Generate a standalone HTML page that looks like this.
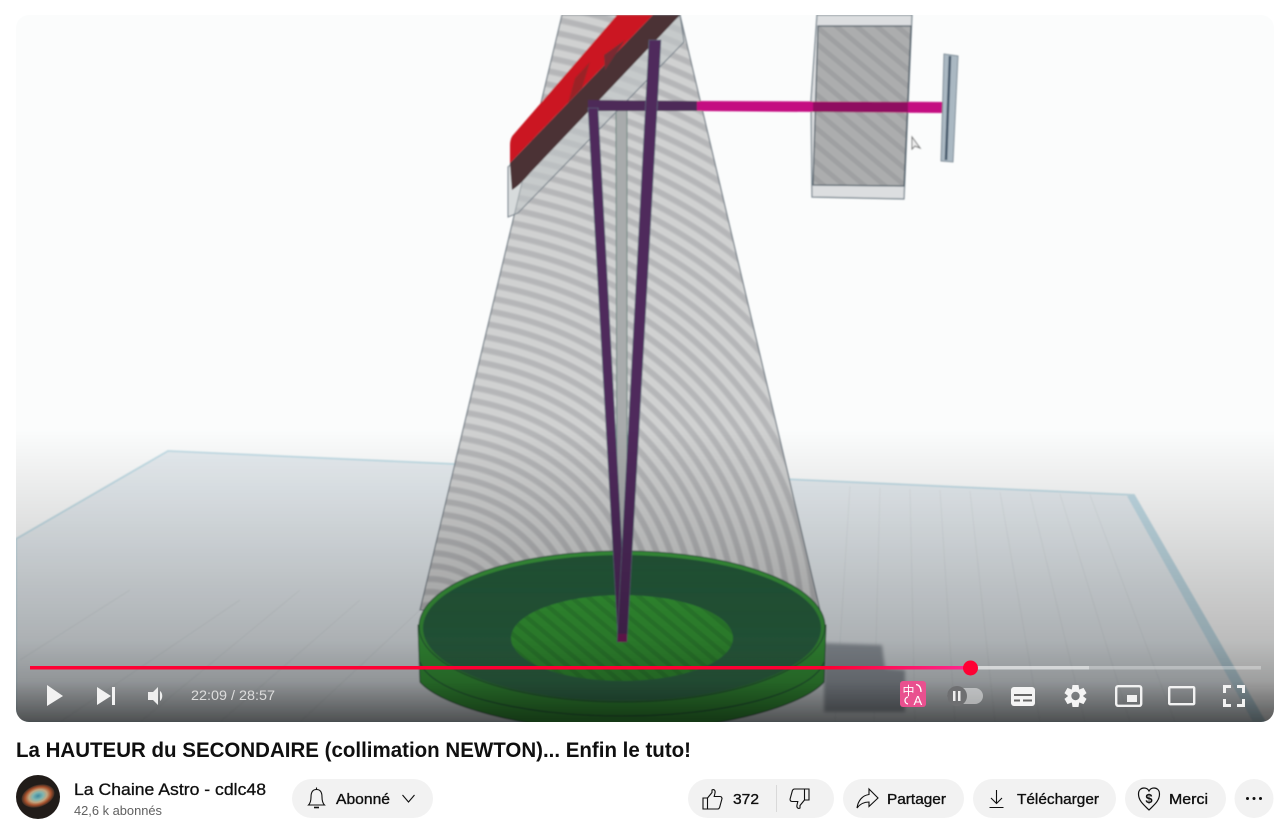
<!DOCTYPE html>
<html><head><meta charset="utf-8"><title>La HAUTEUR du SECONDAIRE</title>
<style>html,body{margin:0;padding:0;background:#fff;width:1275px;height:821px;overflow:hidden}svg{display:block}text{font-family:"Liberation Sans","Noto Sans CJK SC",sans-serif}</style></head><body>
<svg width="1275" height="821" viewBox="0 0 1275 821" xmlns="http://www.w3.org/2000/svg">
<defs>
<clipPath id="v"><rect x="16" y="15" width="1258" height="707" rx="13"/></clipPath>
<filter id="soft" x="-5%" y="-5%" width="110%" height="110%"><feGaussianBlur stdDeviation=".7"/></filter>
<filter id="soft2" x="-10%" y="-10%" width="120%" height="120%"><feGaussianBlur stdDeviation="1.6"/></filter>
<radialGradient id="st" gradientUnits="userSpaceOnUse" cx="430" cy="640" r="13" spreadMethod="repeat">
<stop offset="0" stop-color="#d0d1d1"/><stop offset=".38" stop-color="#d0d1d1"/><stop offset=".56" stop-color="#b5b6b8"/><stop offset=".86" stop-color="#b5b6b8"/><stop offset="1" stop-color="#d0d1d1"/></radialGradient>
<linearGradient id="ov" x1="0" y1="430" x2="0" y2="722" gradientUnits="userSpaceOnUse"><stop offset="0" stop-color="#000" stop-opacity="0"/><stop offset=".3" stop-color="#000" stop-opacity=".1"/><stop offset=".72" stop-color="#000" stop-opacity=".25"/><stop offset=".86" stop-color="#000" stop-opacity=".37"/><stop offset="1" stop-color="#000" stop-opacity=".66"/></linearGradient>
<linearGradient id="pg" x1="30" y1="0" x2="971" y2="0" gradientUnits="userSpaceOnUse"><stop offset="0" stop-color="#f03"/><stop offset=".85" stop-color="#f03"/><stop offset="1" stop-color="#ff2791"/></linearGradient>
<linearGradient id="dk" x1="0" y1="551" x2="0" y2="702" gradientUnits="userSpaceOnUse"><stop offset="0" stop-color="#265a3a"/><stop offset=".5" stop-color="#2a6643"/><stop offset="1" stop-color="#3a7a54"/></linearGradient>
<pattern id="gs" width="11" height="11" patternUnits="userSpaceOnUse" patternTransform="rotate(40)"><rect width="11" height="11" fill="#38a038"/><rect width="11" height="4.5" fill="#319034"/></pattern>
<pattern id="bx" width="13" height="13" patternUnits="userSpaceOnUse" patternTransform="rotate(40)"><rect width="13" height="13" fill="#acadae"/><rect width="13" height="5" fill="#9fa0a2"/></pattern>
<radialGradient id="av" cx=".5" cy=".5" r=".5"><stop offset="0" stop-color="#3f8aa0"/><stop offset=".32" stop-color="#7fb5b0"/><stop offset=".55" stop-color="#c2a57f"/><stop offset=".78" stop-color="#a8512c"/><stop offset="1" stop-color="#3a2a22"/></radialGradient>
</defs>
<g clip-path="url(#v)">
<rect x="16" y="15" width="1258" height="707" fill="#fbfcfc"/>
<g filter="url(#soft)">
<polygon points="16,539 168,451 1134,495 1265,722 16,722" fill="#e6ecf0" stroke="#c2dde6" stroke-width="1.8"/>
<polygon points="1127,496 1134,495 1265,722 1253,722" fill="#c2dce6"/>
<g stroke="#c6ccd0" stroke-width=".8" fill="none" opacity=".4">
<path d="M850,486 L835,722M880,488 L874,722M910,489 L915,722M940,490 L955,722M970,491 L995,722M1000,492 L1040,722M1030,493 L1085,722M1060,494 L1130,722M1090,495 L1175,722"/>
<path d="M60,722 L240,600M140,722 L300,590M220,722 L360,600M300,722 L420,610M20,660 L130,590"/>
</g>
<polygon points="824,643 882,645 885,668 905,670 905,712 824,712" fill="#9aa1a9" filter="url(#soft2)"/>
<polygon points="562,15 680,15 820,610 420,610" fill="url(#st)" stroke="#6f7a83" stroke-width="1.1"/>
<polygon points="616,110 627,110 627,548 617,548" fill="#a8abac" stroke="#6f8a84" stroke-width="1"/>
<polygon points="680,15 684,42 518,213 508,217 508,167" fill="#c0c4c6" fill-opacity=".6" stroke="#76818a" stroke-width="1"/>
<path d="M617,15 H653 L510,163 V145 Q510,138 514,134 Z" fill="#cb1722"/>
<path d="M653,15 H680 L530,173 Q520,185 512,190 L510,163 Z" fill="#4c3236"/>
<polygon points="575,78 590,62 582,88 568,103" fill="#9b2428"/>
<polygon points="604,55 625,40 605,70" fill="#7a2c30"/>
<polygon points="817,15 912,15 904,199 812,197 811,100" fill="#dcdee0" stroke="#76838c" stroke-width="1.2"/>
<polygon points="818,26 911,26 904,186 813,185" fill="url(#bx)" stroke="#52606a" stroke-width="1.2"/>
<polygon points="697,101 945,102 945,113 697,111" fill="#c40c81"/>
<polygon points="813,102 908,102 908,112 813,112" fill="#8f0a60"/>
<polygon points="588,100 697,101 697,111 588,111" fill="#4d2a58"/>
<polygon points="944,54 958,56 953,162 941,161" fill="#aab8c2" stroke="#6b7c88" stroke-width=".8"/>
<path d="M950,56 L946,160" stroke="#44586a" stroke-width="2.5"/>
<path d="M912,137 L912,149 L915,146 L920,148 Z" fill="#eee" stroke="#777" stroke-width="1"/>
<path d="M418,625 L420,682 C440,705 520,730 622,730 C724,730 804,705 824,682 L826,625 Z" fill="#3aa03e" stroke="#2a5e3a" stroke-width="1"/>
<path d="M420,662 A203,60 0 0 0 824,662" fill="none" stroke="#24503c" stroke-width="1"/>
<ellipse cx="622" cy="626.5" rx="203" ry="75.5" fill="#3a9a3e" stroke="#2a5e3a" stroke-width="1"/>
<ellipse cx="622" cy="628" rx="199" ry="73" fill="url(#dk)"/>
<ellipse cx="622" cy="638" rx="111" ry="43" fill="url(#gs)"/>
<polygon points="588,108 598,108 627,640 618,640" fill="#4f2a5c" stroke="#5f6f80" stroke-width=".6"/>
<polygon points="649,40 661,40 627,642 617,642" fill="#4f2a5c" stroke="#5f6f80" stroke-width=".6"/>
<rect x="618" y="634" width="9" height="8" fill="#7a1a5e"/>
</g>
<rect x="16" y="430" width="1258" height="292" fill="url(#ov)"/>
</g>
<rect x="30" y="666" width="1231" height="3.5" fill="#fff" fill-opacity=".3"/>
<rect x="971" y="666" width="118" height="3.5" fill="#fff" fill-opacity=".4"/>
<rect x="30" y="666" width="941" height="3.5" fill="url(#pg)"/>
<circle cx="970.5" cy="668" r="7.5" fill="#f03"/>
<polygon points="47,685 63,696 47,706" fill="#f2f2f2"/>
<polygon points="97,687 111,696 97,705" fill="#f2f2f2"/><rect x="112" y="687" width="3" height="18" fill="#f2f2f2"/>
<path d="M148,692 H153 L158,687 V705 L153,700 H148 Z" fill="#eee"/><path d="M160,691 C163,693 163,699 160,701 Z" fill="#eee"/>
<text x="191" y="700" font-size="13.5" fill="#dcdcdc" textLength="84" lengthAdjust="spacingAndGlyphs">22:09 / 28:57</text>
<rect x="900" y="681" width="26" height="26" rx="3" fill="#e9508f"/>
<text x="902.5" y="695" font-size="12" fill="#fff">中</text><text x="913.5" y="705" font-size="13" fill="#fff">A</text>
<path d="M916,684.5 C919.5,685 921,687.5 921,692M908,697 C904,697.5 904,703.5 908,704" stroke="#fff" stroke-width="1.3" fill="none"/>
<rect x="947" y="688" width="36" height="16" rx="8" fill="#fff" fill-opacity=".45"/>
<circle cx="957" cy="696" r="10" fill="#6e6f71"/><rect x="953" y="691" width="2.5" height="10" fill="#eee"/><rect x="958" y="691" width="2.5" height="10" fill="#eee"/>
<rect x="1011" y="687" width="24" height="19" rx="3" fill="#f4f4f4"/>
<path d="M1014,695 H1032M1014,700.5 H1020M1023,700.5 H1032" stroke="#666" stroke-width="2"/>
<g transform="translate(1075.5,696)" fill="#f4f4f4"><path d="M-3,-11 H3 L3.6,-7 L-3.6,-7 Z" /><path d="M-3,-11 H3 L3.6,-7 L-3.6,-7 Z" transform="rotate(60)"/><path d="M-3,-11 H3 L3.6,-7 L-3.6,-7 Z" transform="rotate(120)"/><path d="M-3,-11 H3 L3.6,-7 L-3.6,-7 Z" transform="rotate(180)"/><path d="M-3,-11 H3 L3.6,-7 L-3.6,-7 Z" transform="rotate(240)"/><path d="M-3,-11 H3 L3.6,-7 L-3.6,-7 Z" transform="rotate(300)"/><circle r="6" fill="none" stroke="#f4f4f4" stroke-width="3.6"/></g>
<rect x="1116.2" y="686.2" width="25" height="19.6" rx="2" fill="none" stroke="#f2f2f2" stroke-width="2.4"/><rect x="1127" y="695" width="10" height="7" fill="#f2f2f2"/>
<rect x="1169.2" y="687.2" width="25" height="17" rx="1" fill="none" stroke="#f2f2f2" stroke-width="2.4"/>
<path d="M1224.5,693 V686.5 H1231M1237,686.5 H1243.5 V693M1243.5,699 V705.5 H1237M1231,705.5 H1224.5 V699" fill="none" stroke="#f2f2f2" stroke-width="3"/>

<text x="16" y="757" font-size="21" font-weight="700" fill="#0f0f0f" textLength="675" lengthAdjust="spacingAndGlyphs">La HAUTEUR du SECONDAIRE (collimation NEWTON)... Enfin le tuto!</text>
<circle cx="38" cy="797" r="22" fill="#211c19"/>
<ellipse cx="38" cy="796" rx="17" ry="11" transform="rotate(-18 38 796)" fill="url(#av)"/>
<text x="74" y="795" font-size="17" fill="#0f0f0f" stroke="#0f0f0f" stroke-width=".3" textLength="192" lengthAdjust="spacingAndGlyphs">La Chaine Astro - cdlc48</text>
<text x="74" y="815" font-size="12.5" fill="#606060" textLength="88" lengthAdjust="spacingAndGlyphs">42,6 k abonnés</text>
<rect x="292" y="779" width="141" height="39" rx="19.5" fill="#f2f2f2"/>
<path d="M308.5,805 C310.5,803 311,801 311,797 C311,791.5 313,789.5 316.5,789.5 C320,789.5 322,791.5 322,797 C322,801 322.5,803 324.5,805 Z" fill="none" stroke="#0f0f0f" stroke-width="1.1"/><path d="M314,807.5 H319" stroke="#0f0f0f" stroke-width="1.6"/><path d="M316.5,787.5 V789.5" stroke="#0f0f0f" stroke-width="1.1"/>
<rect x="688" y="779" width="146" height="39" rx="19.5" fill="#f2f2f2"/>
<rect x="843" y="779" width="121" height="39" rx="19.5" fill="#f2f2f2"/>
<rect x="973" y="779" width="143" height="39" rx="19.5" fill="#f2f2f2"/>
<rect x="1125" y="779" width="101" height="39" rx="19.5" fill="#f2f2f2"/>
<g font-size="15" fill="#0f0f0f" stroke="#0f0f0f" stroke-width=".35">
<text x="336" y="804" textLength="54" lengthAdjust="spacingAndGlyphs">Abonné</text>
<text x="733" y="804" textLength="26" lengthAdjust="spacingAndGlyphs">372</text>
<text x="887" y="804" textLength="59" lengthAdjust="spacingAndGlyphs">Partager</text>
<text x="1017" y="804" textLength="82" lengthAdjust="spacingAndGlyphs">Télécharger</text>
<text x="1169" y="804" textLength="39" lengthAdjust="spacingAndGlyphs">Merci</text>
</g>
<path d="M402.5,795 L408.5,802 L414.5,795" fill="none" stroke="#0f0f0f" stroke-width="1.1"/>
<path d="M776.5,785 V812" stroke="#d9d9d9" stroke-width="1"/>
<g transform="translate(700,787)" fill="none" stroke="#0f0f0f" stroke-width="1.1"><path d="M3,11 H7.5 V22 H3 Z"/><path d="M7.5,11 L12,5.5 V3 C14,1.8 15.6,3.5 15,6 L14.2,9.5 H20 C21.6,9.5 22.3,11 21.8,12.4 L19.6,20.4 C19.2,21.4 18.6,22 17.5,22 H7.5"/></g>
<g transform="translate(788,787) rotate(180 12 12)" fill="none" stroke="#0f0f0f" stroke-width="1.1"><path d="M3,11 H7.5 V22 H3 Z"/><path d="M7.5,11 L12,5.5 V3 C14,1.8 15.6,3.5 15,6 L14.2,9.5 H20 C21.6,9.5 22.3,11 21.8,12.4 L19.6,20.4 C19.2,21.4 18.6,22 17.5,22 H7.5"/></g>
<path d="M869,789 L878,798 L869,806.5 V802 C864,802 860,804 857,808 C858,801 862,795.5 869,794.5 Z" fill="none" stroke="#0f0f0f" stroke-width="1.1"/>
<path d="M996.5,790 V803M991,798 L996.5,803.5 L1002,798M989.5,807.5 H1003.5" fill="none" stroke="#0f0f0f" stroke-width="1.1"/>
<path d="M1149,810 C1144,805 1138.5,801 1138.5,794 C1138.5,790 1141,788 1144,788 C1146,788 1148,789 1149,791 C1150,789 1152,788 1154,788 C1157,788 1159.5,790 1159.5,794 C1159.5,801 1154,805 1149,810 Z" fill="none" stroke="#0f0f0f" stroke-width="1.2"/>
<text x="1149" y="803" font-size="13" font-weight="700" fill="#0f0f0f" text-anchor="middle">$</text>
<circle cx="1254" cy="798.5" r="19.5" fill="#f2f2f2"/>
<circle cx="1247.5" cy="798.5" r="1.5" fill="#0f0f0f"/><circle cx="1254" cy="798.5" r="1.5" fill="#0f0f0f"/><circle cx="1260.5" cy="798.5" r="1.5" fill="#0f0f0f"/>
</svg>
</body></html>
